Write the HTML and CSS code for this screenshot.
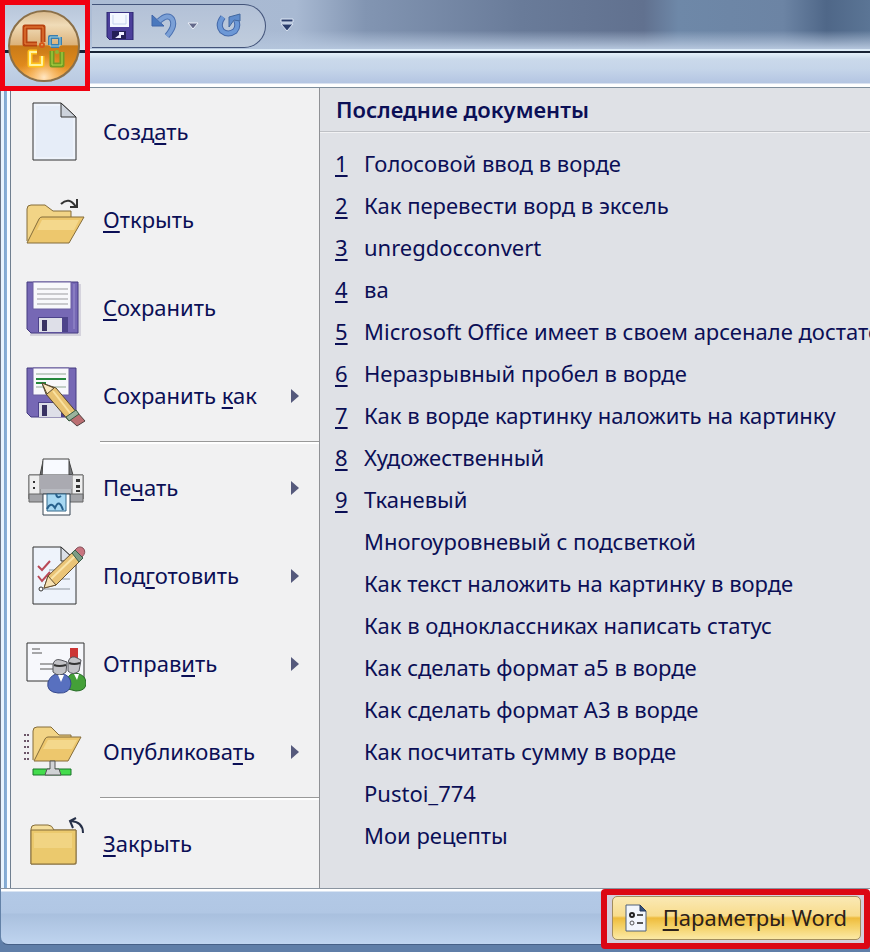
FILE: index.html
```
<!DOCTYPE html>
<html lang="ru">

<head>
    <meta charset="utf-8">
    <title>Word</title>
    <link rel="stylesheet" href="styles.css">
</head>

<body>

    <div class="window">

        <header class="titlebar">
            <button class="office" aria-label="Office">
                <svg width="74" height="74" viewBox="0 0 74 74">
                    <defs>
                        <linearGradient id="orb" x1="0" y1="0" x2="0" y2="1">
                            <stop offset="0" stop-color="#d9b98c" />
                            <stop offset=".2" stop-color="#f0dcb8" />
                            <stop offset=".48" stop-color="#dcb27a" />
                            <stop offset=".5" stop-color="#c87a18" />
                            <stop offset=".78" stop-color="#e08a1c" />
                            <stop offset="1" stop-color="#f8b866" />
                        </linearGradient>
                        <radialGradient id="glow" cx=".5" cy=".96" r=".36">
                            <stop offset="0" stop-color="#ffe6c4" />
                            <stop offset="1" stop-color="#ffad3a" stop-opacity="0" />
                        </radialGradient>
                    </defs>
                    <circle cx="38" cy="38" r="35" fill="#85705a" opacity=".5" />
                    <circle cx="37" cy="37" r="35" fill="url(#orb)" stroke="#8b7049" stroke-width="2" />
                    <circle cx="37" cy="37" r="34" fill="url(#glow)" />
                    <g fill="none" stroke-linejoin="round">
                        <path d="M30 35H18V18h18v15" stroke="#b84310" stroke-width="5" />
                        <path d="M30 35H18V18h18v15" stroke="#ee8740" stroke-width="1" />
                        <circle cx="35" cy="36" r="2" stroke="#d65718" stroke-width="2" />
                        <path d="M43 28h10v9H43z" stroke="#3b7fae" stroke-width="4" stroke-dasharray="8 2" />
                        <path d="M43 28h10v9H43z" stroke="#9ed4e5" stroke-width="1" />
                        <path d="M30 43h-7v13h12v-9" stroke="#ffc21c" stroke-width="5" />
                        <path d="M30 43h-7v13h12v-9" stroke="#fff4a0" stroke-width="2" />
                        <path d="M45 42v14h10V43" stroke="#709c23" stroke-width="5" />
                        <path d="M45 42v14h10V43" stroke="#b5dc48" stroke-width="1" />
                        <circle cx="50" cy="43" r="2" fill="#8fb533" />
                    </g>
                </svg>
            </button>
            <div class="quick">
                <button class="tool" aria-label="Сохранить">
                    <svg width="28" height="28" viewBox="0 0 28 28">
                        <path d="M1 0h26v28H4l-3-3z" fill="#4b3f9b" stroke="#29246b" />
                        <path d="M4 1h19v14H4z" fill="#f4f8ff" />
                        <path d="M7 3v9h13V3" fill="none" stroke="#c5d3ed" />
                        <path d="M6 19h14v8H6z" fill="#241f57" />
                        <path d="M13 20h5v3h-3v3H9l4-3z" fill="#eef" />
                    </svg>
                </button>
                <button class="tool" aria-label="Отменить">
                    <svg width="28" height="28" viewBox="0 0 28 28">
                        <path d="M9 9q9-8 13-2 4 7-5 17" fill="none" stroke="#4a70b0" stroke-width="6" />
                        <path d="M2 3v11h12z" fill="#4a78bd" stroke="#3e64a8" />
                        <path d="M9 9q9-8 13-2 4 7-5 17" fill="none" stroke="#7ba0d6" stroke-width="4" />
                    </svg>
                </button>
                <button class="tool arrow" aria-label="Список отмены">
                    <svg width="12" height="8" viewBox="0 0 12 8">
                        <path d="M1 1h10L6 7z" fill="#63698a" stroke="#eef3fb" />
                    </svg>
                </button>
                <button class="tool" aria-label="Вернуть">
                    <svg width="28" height="28" viewBox="0 0 28 28">
                        <path d="M8 5q-6 8-1 14 6 5 13 0 4-5 1-11" fill="none" stroke="#4468a8" stroke-width="6" />
                        <path d="M8 5q-6 8-1 14 6 5 13 0 4-5 1-11" fill="none" stroke="#6c98d6" stroke-width="4" />
                        <path d="M14 15V5l11-3v7l-6-1z" fill="#5f8ccc" stroke="#42689f" />
                    </svg>
                </button>
            </div>
            <button class="tool more" aria-label="Настройка панели">
                <svg width="14" height="14" viewBox="0 0 14 14">
                    <path d="M1 1h12v3H1zM1 6h12L7 13z" fill="#2a3d6b" stroke="#dce6f5" />
                </svg>
            </button>
        </header>

        <div class="strip"></div>

        <main class="menu">
            <nav class="commands">
                <a class="command" href="#">
                    <svg class="icon" viewBox="0 0 64 64">
                        <path d="M11 3h28l15 14v43H11z" fill="#eef3fb" stroke="#333" />
                        <path d="M14 6h24v12h13v39H14z" fill="#e6edf8" />
                        <path d="M39 3v14h15z" fill="#cdd3dc" stroke="#333" />
                    </svg>
                    <span>Созд<u>а</u>ть</span>
                </a>
                <a class="command" href="#">
                    <svg class="icon" viewBox="0 0 64 64">
                        <path d="M5 53V21q0-4 4-4h14l8 6h18v9" fill="#f2d486" stroke="#846c3a" />
                        <path d="M5 55l12-24q1-2 3-2h42L47 55z" fill="#edc76d" stroke="#846c3a" />
                        <path d="M20 32h37l-5 10H15z" fill="#f8e2a1" opacity=".6" />
                        <path d="M39 16q8-8 15 3M48 19h7v-8" fill="none" stroke="#333" stroke-width="2" />
                    </svg>
                    <span><u>О</u>ткрыть</span>
                </a>
                <a class="command" href="#">
                    <svg class="icon" viewBox="0 0 64 64">
                        <path d="M8 8h51v52H8z" fill="#d5d3dd" />
                        <path d="M5 6h51v51H9l-4-4z" fill="#7668b5" stroke="#453a80" />
                        <path d="M11 6h38v27H11z" fill="#f8f8fb" stroke="#6a5fa0" />
                        <path d="M15 13h31M15 18h31M15 23h31M15 28h31" stroke="#9b9b9f" />
                        <path d="M16 41h30v15H16z" fill="#4d438b" />
                        <path d="M17 42h23v14H17z" fill="#dedfe8" />
                        <path d="M20 44h5v11h-5z" fill="#393263" />
                        <path d="M52 8v45" stroke="#9b91ce" />
                    </svg>
                    <span><u>С</u>охранить</span>
                </a>
                <a class="command" href="#">
                    <svg class="icon" viewBox="0 0 64 64">
                        <path d="M5 4h49v49H9l-4-4z" fill="#7668b5" stroke="#453a80" />
                        <path d="M11 4h36v27H11z" fill="#f8f8fb" stroke="#6a5fa0" />
                        <path d="M14 10h30M14 23h30" stroke="#8ea792" />
                        <path d="M14 15h30M14 19h10" stroke="#25883c" stroke-width="2" />
                        <path d="M16 38h27v15H16z" fill="#4d438b" />
                        <path d="M17 39h22v14H17z" fill="#dedfe8" />
                        <path d="M20 41h5v11h-5z" fill="#393263" />
                        <path d="M20 19l14 5 22 26-9 7-23-27z" fill="#e8c271" stroke="#55472e" />
                        <path d="M20 19l12 5-7 6z" fill="#fbe7bb" stroke="#55472e" />
                        <path d="M31 27l21 27" stroke="#f9e1a0" stroke-width="2" />
                        <path d="M55 48l8 9-8 5-9-8z" fill="#bb6e72" stroke="#4f4040" />
                        <path d="M54 46l-10 7 3 4 10-7z" fill="#9ab39d" stroke="#365b42" />
                    </svg>
                    <span>Сохранить <u>к</u>ак</span>
                    <svg class="more-arrow" viewBox="0 0 8 14"><path d="M0 0v14l8-7z" /></svg>
                </a>
                <hr class="split">
                <a class="command" href="#">
                    <svg class="icon" viewBox="0 0 64 64">
                        <path d="M18 19l3-14h26l4 14z" fill="#77797d" stroke="#444" />
                        <path d="M21 3h26v18H20z" fill="#f8faff" stroke="#444" />
                        <path d="M7 19h54v24H7z" fill="#b9bbc1" stroke="#444" />
                        <path d="M7 19h11v24H7zM50 19h11v24H50z" fill="#eee" stroke="#777" />
                        <path d="M18 19h32v14H18z" fill="#aaaab1" />
                        <path d="M7 38h54v8H7z" fill="#a3a4a8" stroke="#666" />
                        <path d="M54 23h4v3h-4zM54 29h4v3h-4zM54 34h4v2h-4zM11 25h2v2h-2zM11 31h2v2h-2z" fill="#333" />
                        <path d="M21 38h27v21H21z" fill="#fff" stroke="#364552" />
                        <path d="M25 38h19v17H25z" fill="#a7d8f2" stroke="#35688a" />
                        <path d="M25 53q4-8 8-1 4-10 8 2M34 38q1 5 5 2" fill="none" stroke="#27618d" stroke-width="2" />
                    </svg>
                    <span>Пе<u>ч</u>ать</span>
                    <svg class="more-arrow" viewBox="0 0 8 14"><path d="M0 0v14l8-7z" /></svg>
                </a>
                <a class="command" href="#">
                    <svg class="icon" viewBox="0 0 64 64">
                        <path d="M11 3h28l15 14v43H11z" fill="#eef3fb" stroke="#333" />
                        <path d="M39 3v14h15z" fill="#dbe0e8" stroke="#333" />
                        <path d="M27 26h18M27 35h21M20 45h28" stroke="#8d949d" />
                        <path d="M16 22l4 4 8-9M16 32l4 5 8-9" fill="none" stroke="#b94856" stroke-width="2" />
                        <path d="M22 44l4-12 26-25 8 8-26 26z" fill="#eac477" stroke="#675131" />
                        <path d="M29 35l25-24" stroke="#f9e4aa" stroke-width="2" />
                        <path d="M22 44l4-12 8 9z" fill="#f7e2b4" stroke="#675131" />
                        <path d="M53 6q4-5 8-2 4 4-1 9z" fill="#c97580" stroke="#855059" />
                        <path d="M50 9l7 9 4-4-8-8z" fill="#7d9c85" stroke="#395f49" />
                        <circle cx="19" cy="45" r="2" fill="#fff" stroke="#333" />
                    </svg>
                    <span>Под<u>г</u>отовить</span>
                    <svg class="more-arrow" viewBox="0 0 8 14"><path d="M0 0v14l8-7z" /></svg>
                </a>
                <a class="command" href="#">
                    <svg class="icon" viewBox="0 0 64 64">
                        <path d="M5 11h57v38H5z" fill="#f7f8fc" stroke="#333" />
                        <path d="M10 17h8M10 21h10M18 32h16M18 37h16" stroke="#555" />
                        <path d="M48 16h8v10h-8z" fill="#cc3535" />
                        <path d="M45 48q2-7 9-7 10 2 10 10 0 8-10 8l-8-2z" fill="#44a038" stroke="#256a26" />
                        <path d="M26 50q3-8 12-9 11 2 11 11-1 10-13 9-12-1-10-11z" fill="#5870bf" stroke="#35488d" />
                        <path d="M31 33q1-7 8-5l6 2-1 10q-7 6-13 0zM46 31q1-7 7-6l6 3-2 11q-6 5-11 0z" fill="#c2c2c6" stroke="#55565c" />
                        <path d="M32 33q5 2 12 0M47 31q5 2 11 0" fill="none" stroke="#333" stroke-width="2" />
                        <path d="M36 43h6l-3 7zM52 42h5l-2 6z" fill="#fff" />
                    </svg>
                    <span>Отправ<u>и</u>ть</span>
                    <svg class="more-arrow" viewBox="0 0 8 14"><path d="M0 0v14l8-7z" /></svg>
                </a>
                <a class="command" href="#">
                    <svg class="icon" viewBox="0 0 64 64">
                        <path d="M11 40V11q0-4 4-4h14l8 8h12v8" fill="#f2d486" stroke="#846c3a" />
                        <path d="M12 41l11-22q1-2 3-2h33L46 41z" fill="#edc76d" stroke="#846c3a" />
                        <path d="M26 20h29l-5 9H21z" fill="#f8e2a1" opacity=".6" />
                        <path d="M2 15h6M2 21h6M2 27h6M2 33h6M2 39h6" stroke="#6c5668" stroke-width="2" stroke-dasharray="2 1" />
                        <path d="M11 49h38v6H11z" fill="#44dc4d" stroke="#1b752b" />
                        <path d="M28 41h5v8h4l2 6H23l2-6h3z" fill="#d0d2d5" stroke="#555" />
                    </svg>
                    <span>Опубликова<u>т</u>ь</span>
                    <svg class="more-arrow" viewBox="0 0 8 14"><path d="M0 0v14l8-7z" /></svg>
                </a>
                <hr class="split">
                <a class="command" href="#">
                    <svg class="icon" viewBox="0 0 64 64">
                        <path d="M9 52V17q0-4 4-4h13q4 0 6 5h22v34z" fill="#f5df9e" stroke="#846c3a" />
                        <path d="M9 18h45v32q0 2-2 2H9z" fill="#ebc96d" stroke="#846c3a" />
                        <path d="M12 21h38v15H12z" fill="#f5dc92" opacity=".6" />
                        <path d="M61 21q0-11-12-12M54 6l-6 3 3 7" fill="none" stroke="#263048" stroke-width="2" />
                    </svg>
                    <span><u>З</u>акрыть</span>
                </a>
            </nav>

            <section class="recent">
                <h1>Последние документы</h1>
                <ul>
                    <li><a href="#"><u>1</u><span>Голосовой ввод в ворде</span></a></li>
                    <li><a href="#"><u>2</u><span>Как перевести ворд в эксель</span></a></li>
                    <li><a href="#"><u>3</u><span>unregdocconvert</span></a></li>
                    <li><a href="#"><u>4</u><span>ва</span></a></li>
                    <li><a href="#"><u>5</u><span>Microsoft Office имеет в своем арсенале достато</span></a></li>
                    <li><a href="#"><u>6</u><span>Неразрывный пробел в ворде</span></a></li>
                    <li><a href="#"><u>7</u><span>Как в ворде картинку наложить на картинку</span></a></li>
                    <li><a href="#"><u>8</u><span>Художественный</span></a></li>
                    <li><a href="#"><u>9</u><span>Тканевый</span></a></li>
                    <li><a href="#"><span>Многоуровневый с подсветкой</span></a></li>
                    <li><a href="#"><span>Как текст наложить на картинку в ворде</span></a></li>
                    <li><a href="#"><span>Как в одноклассниках написать статус</span></a></li>
                    <li><a href="#"><span>Как сделать формат а5 в ворде</span></a></li>
                    <li><a href="#"><span>Как сделать формат А3 в ворде</span></a></li>
                    <li><a href="#"><span>Как посчитать сумму в ворде</span></a></li>
                    <li><a href="#"><span>Pustoi_774</span></a></li>
                    <li><a href="#"><span>Мои рецепты</span></a></li>
                </ul>
            </section>
        </main>

        <footer class="bottom">
            <div class="marked">
                <button class="options">
                    <svg width="22" height="28" viewBox="0 0 22 28">
                        <path d="M1 1h14l6 6v20H1z" fill="#f2f6fc" stroke="#4e617b" />
                        <path d="M15 1v6h6z" fill="#36527e" stroke="#27395a" />
                        <circle cx="7" cy="11" r="2" fill="none" stroke="#222" stroke-width="2" />
                        <circle cx="7" cy="19" r="2" fill="none" stroke="#555" />
                        <path d="M12 11h6M12 19h6" stroke="#555" stroke-width="2" />
                    </svg>
                    <span><u>П</u>араметры Word</span>
                </button>
            </div>
        </footer>
    </div>

</body>

</html>
```
FILE: styles.css
```
* {
    box-sizing: border-box;
}

body {
    margin: 0;
    font-family: "Noto Sans", "Open Sans", sans-serif;
    font-size: 22px;
    color: #0b0f56;
    background-color: #5f7ea8;
}

a {
    color: inherit;
    text-decoration: none;
}

u {
    text-decoration-thickness: 2px;
    text-underline-offset: 3px;
    text-decoration-skip-ink: none;
}

button {
    font: inherit;
    border: none;
    background: none;
    padding: 0;
}

.window {
    position: relative;
    min-height: 100vh;
    padding-bottom: 7px;
    overflow: hidden;
}

/* title bar */
.titlebar {
    display: flex;
    align-items: flex-start;
    height: 53px;
    padding: 4px 0 0 92px;
    border-bottom: 2px solid #172235;
    background: linear-gradient(to bottom, transparent 60%, #b4c5dc 96%, #dcebf7 97%),
        linear-gradient(to right, #aebed6 0%, #a8b9d2 34%, #8295b2 42%, #697b99 60%, #61718f 74%, #6e88a8 78%, #6c84a4 90%, #4f6788 95%, #5b7595 100%);
}

.office {
    position: absolute;
    left: 0;
    top: 0;
    z-index: 1;
    width: 90px;
    height: 91px;
    border: 5px solid #f00010;
    background: linear-gradient(to bottom, #b8c6da, #d5e1f0 56%, #172235 56%, #172235 59%, #c8d8ea 59%, #b9c9e1);
}

.office svg {
    display: block;
    margin: 0 0 0 2px;
}

.quick {
    display: flex;
    align-items: center;
    height: 44px;
    width: 174px;
    gap: 16px;
    padding: 0 22px 0 14px;
    border: 1px solid #43547a;
    border-left: none;
    border-radius: 0 22px 22px 0;
    background: linear-gradient(to bottom, #b3c1d7, #c0cddd);
}

.quick .arrow {
    margin: 0 0 0 -7px;
}

.tool svg {
    display: block;
}

.more {
    margin: 14px 0 0 14px;
}

.strip {
    height: 35px;
    border-bottom: 1px solid #7e8e9d;
    background: linear-gradient(to bottom, #e4f0fa 0, #cad9eb 6px, #c5d5e9 16px, #b4c5e2 30px, #fff 31px);
}

/* menu */
.menu {
    display: flex;
    padding-left: 11px;
    background: linear-gradient(to right, #6a7486 1px, #e8f4fe 1px, #e8f4fe 4px, #7fa6cf 4px, #8db3da 7px, #f8fcff 7px, #f8fcff 10px, #707f90 10px);
}

.commands {
    flex: 0 0 309px;
    border-right: 1px solid #8f9195;
    background-color: #f1f1f2;
}

.command {
    display: flex;
    align-items: center;
    height: 88px;
    padding: 0 20px 0 11px;
}

.command span {
    padding-bottom: 2px;
}

.icon {
    width: 64px;
    height: 64px;
    margin-right: 17px;
}

.more-arrow {
    width: 8px;
    height: 14px;
    margin-left: auto;
    fill: #55597c;
}

.split {
    height: 4px;
    margin: 0 0 0 89px;
    border: none;
    background: linear-gradient(to bottom, #f1f1f2 1px, #999 1px, #999 2px, #fff 2px);
}

.recent {
    flex: 1;
    min-width: 0;
    background-color: #dfe1e6;
}

.recent h1 {
    height: 44px;
    margin: 0;
    padding-left: 16px;
    font-size: 22px;
    font-weight: 600;
    line-height: 42px;
    border-bottom: 1px solid #bfc1c6;
    box-shadow: 0 1px #f2f2f4;
}

.recent ul {
    margin: 0;
    padding: 10px 0 0;
    list-style: none;
}

.recent a {
    display: flex;
    height: 42px;
    padding-left: 44px;
    line-height: 42px;
    white-space: nowrap;
    overflow: hidden;
}

.recent a u {
    flex: 0 0 29px;
    margin-left: -29px;
}

/* bottom bar */
.bottom {
    display: flex;
    justify-content: flex-end;
    height: 57px;
    border-top: 1px solid #8a94a0;
    border-bottom: 1px solid #466087;
    border-left: 1px solid #6382a8;
    border-radius: 0 0 0 8px;
    background: linear-gradient(to bottom, #fff 2px, #b3c9e6 3px, #b1c7e4 24px, #a9c0de 25px, #bfd4ef 100%);
}

.marked {
    height: 60px;
    border: 6px solid #dc0714;
    border-radius: 4px;
    padding: 1px 3px 2px 5px;
    background-color: #d4cfdc;
}

.options {
    display: flex;
    align-items: center;
    gap: 16px;
    height: 44px;
    padding: 0 13px 0 12px;
    border: 1px solid #a28d5d;
    border-radius: 5px;
    color: #2c211b;
    background: linear-gradient(to bottom, #fae9b5, #f8dc8c 45%, #eebb3c 50%, #f3cc5b 65%, #fbe9a5);
}

.options span {
    padding-bottom: 2px;
}
```
